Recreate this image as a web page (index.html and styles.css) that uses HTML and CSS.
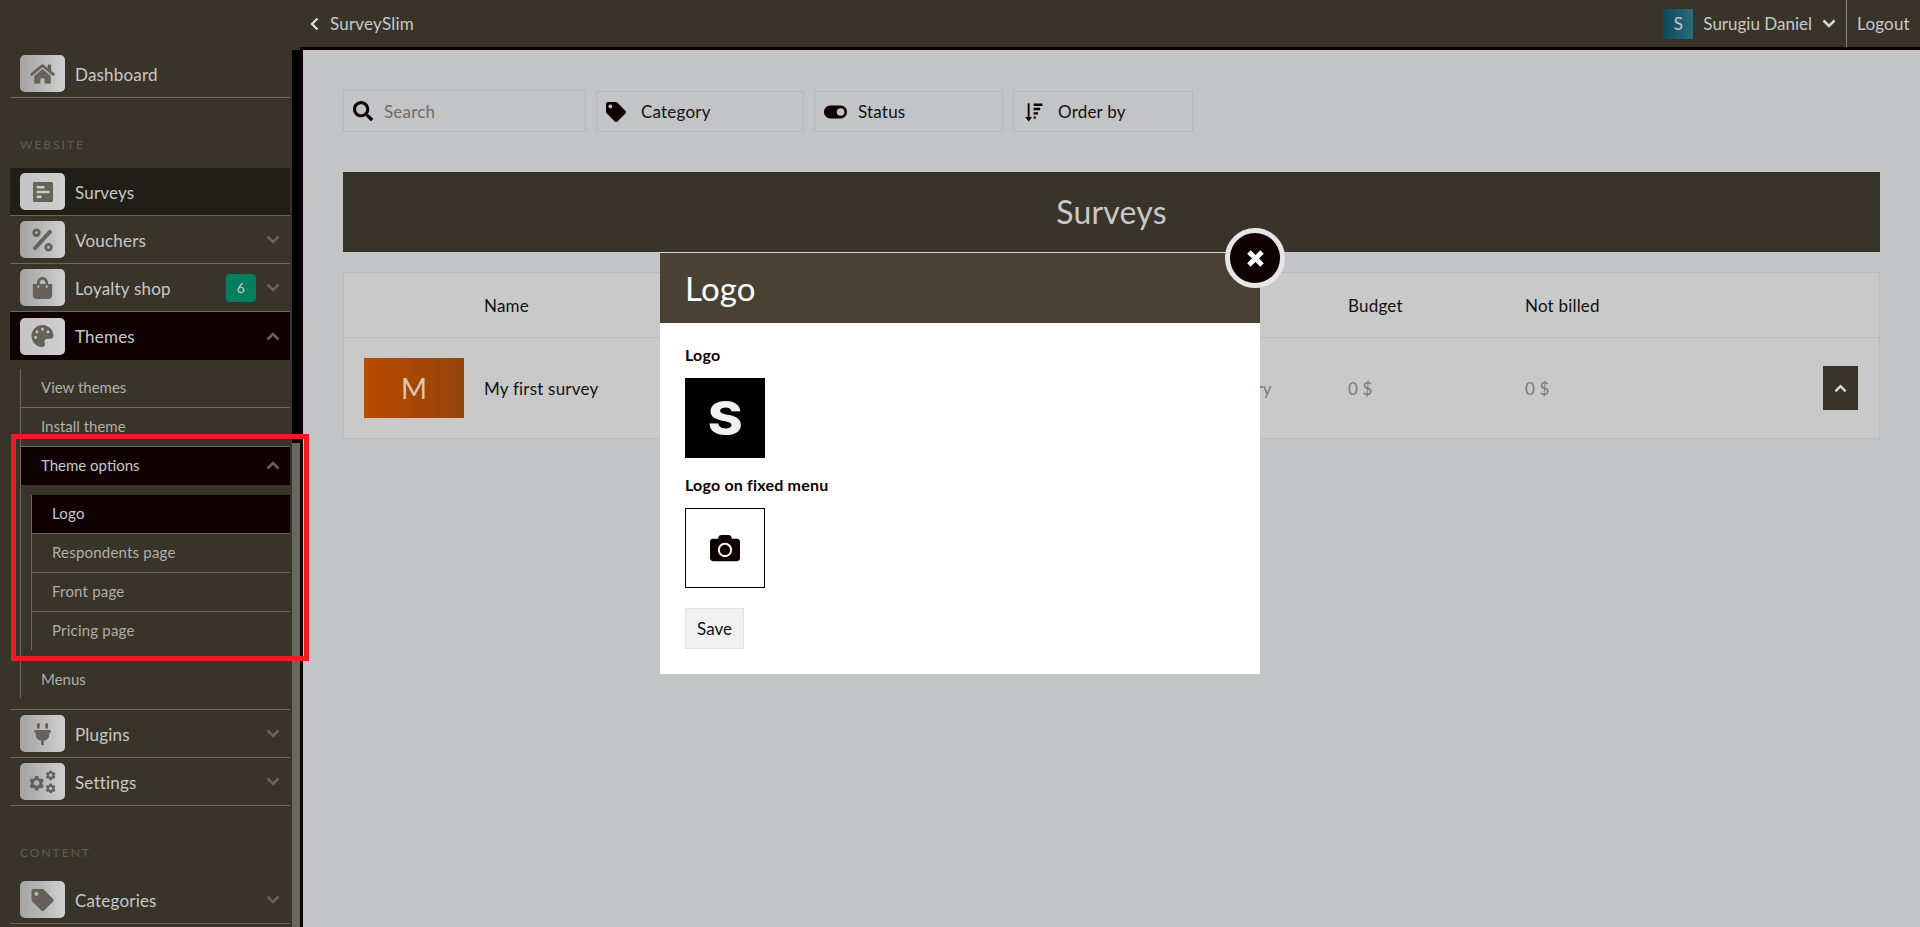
FILE: index.html
```html
<!DOCTYPE html>
<html lang="en">
<head>
    <meta charset="UTF-8">
    <meta name="viewport" content="width=device-width, initial-scale=1.0">
    <title>Surveys</title>
    <link rel="stylesheet" href="styles.css">
</head>
<body>
    <div class="left-col">
        <nav class="sidebar">
            <a class="nav-row">
                <span class="nav-icon"><svg viewBox="0 0 576 512"><path d="M280.37 148.26L96 300.11V464a16 16 0 0 0 16 16l112.06-.29a16 16 0 0 0 15.92-16V368a16 16 0 0 1 16-16h64a16 16 0 0 1 16 16v95.64a16 16 0 0 0 16 16.05L464 480a16 16 0 0 0 16-16V300L295.67 148.26a12.19 12.19 0 0 0-15.3 0zM571.6 251.47L488 182.56V44.05a12 12 0 0 0-12-12h-56a12 12 0 0 0-12 12v72.61L318.47 43a48 48 0 0 0-61 0L4.34 251.47a12 12 0 0 0-1.6 16.9l25.5 31A12 12 0 0 0 45.15 301l235.22-193.74a12.19 12.19 0 0 1 15.3 0L530.9 301a12 12 0 0 0 16.9-1.6l25.5-31a12 12 0 0 0-1.7-16.93z"/></svg></span>
                <span class="nav-text">Dashboard</span>
            </a>
            <div class="nav-label">WEBSITE</div>
            <a class="nav-row current">
                <span class="nav-icon light"><svg class="ico-poll" viewBox="0 0 448 448"><path fill-rule="evenodd" d="M40 0h368c22 0 40 18 40 40v368c0 22-18 40-40 40H40c-22 0-40-18-40-40V40C0 18 18 0 40 0zM80 88v56h176V88zM80 196v56h288v-56zM80 304v56h112v-56z"/></svg></span>
                <span class="nav-text">Surveys</span>
            </a>
            <a class="nav-row">
                <span class="nav-icon"><svg class="ico-percent" viewBox="0 0 448 512"><path d="M370 30l68 50L78 482l-68-50z"/><path fill-rule="evenodd" d="M95 10a90 90 0 1 1 0 180 90 90 0 0 1 0-180zm0 60a30 30 0 1 0 0 60 30 30 0 0 0 0-60zM353 322a90 90 0 1 1 0 180 90 90 0 0 1 0-180zm0 60a30 30 0 1 0 0 60 30 30 0 0 0 0-60z"/></svg></span>
                <span class="nav-text">Vouchers</span>
                <svg class="chev" viewBox="0 0 14 9"><path d="M1.500 1.500L7 7l5.500-5.500"/></svg>
            </a>
            <a class="nav-row">
                <span class="nav-icon"><svg viewBox="0 0 448 512"><path d="M352 160v-32C352 57.420 294.579 0 224 0 153.420 0 96 57.420 96 128v32H0v272c0 44.183 35.817 80 80 80h288c44.183 0 80-35.817 80-80V160h-96zm-192-32c0-35.290 28.710-64 64-64s64 28.710 64 64v32H160v-32zm160 120c-13.255 0-24-10.745-24-24s10.745-24 24-24 24 10.745 24 24-10.745 24-24 24zm-192 0c-13.255 0-24-10.745-24-24s10.745-24 24-24 24 10.745 24 24-10.745 24-24 24z"/></svg></span>
                <span class="nav-text">Loyalty shop</span>
                <span class="badge">6</span>
                <svg class="chev" viewBox="0 0 14 9"><path d="M1.500 1.500L7 7l5.500-5.500"/></svg>
            </a>
            <a class="nav-row open">
                <span class="nav-icon light"><svg viewBox="0 0 512 512"><path d="M204.300 5C104.900 24.400 24.800 104.300 5.200 203.400c-37 187 131.700 326.400 258.800 306.700 41.200-6.400 61.400-54.600 42.500-91.700-23.100-45.400 9.900-98.400 60.900-98.400h79.700c35.800 0 64.800-29.600 64.900-65.300C511.500 97.100 368.100-26.900 204.300 5zM96 320c-17.700 0-32-14.300-32-32s14.300-32 32-32 32 14.300 32 32-14.300 32-32 32zm32-128c-17.700 0-32-14.300-32-32s14.300-32 32-32 32 14.300 32 32-14.300 32-32 32zm128-64c-17.700 0-32-14.300-32-32s14.300-32 32-32 32 14.300 32 32-14.300 32-32 32zm128 64c-17.700 0-32-14.300-32-32s14.300-32 32-32 32 14.300 32 32-14.300 32-32 32z"/></svg></span>
                <span class="nav-text">Themes</span>
                <svg class="chev" viewBox="0 0 14 9"><path d="M1.500 7.500L7 2l5.500 5.500"/></svg>
            </a>
            <div class="subnav">
                <a class="sub-row">View themes</a>
                <a class="sub-row">Install theme</a>
                <a class="sub-row open">Theme options<svg class="chev" viewBox="0 0 14 9"><path d="M1.500 7.500L7 2l5.500 5.500"/></svg></a>
                <div class="subsub">
                    <a class="subsub-row open">Logo</a>
                    <a class="subsub-row">Respondents page</a>
                    <a class="subsub-row">Front page</a>
                    <a class="subsub-row last">Pricing page</a>
                </div>
                <a class="sub-row last">Menus</a>
            </div>
            <a class="nav-row topline">
                <span class="nav-icon"><svg viewBox="0 0 384 512"><path d="M320 32a32 32 0 0 0-64 0v96h64zm48 128H16a16 16 0 0 0-16 16v32a16 16 0 0 0 16 16h16v32a160.070 160.070 0 0 0 128 156.800V512h64v-99.200A160.070 160.070 0 0 0 352 256v-32h16a16 16 0 0 0 16-16v-32a16 16 0 0 0-16-16zM128 32a32 32 0 0 0-64 0v96h64z"/></svg></span>
                <span class="nav-text">Plugins</span>
                <svg class="chev" viewBox="0 0 14 9"><path d="M1.500 1.500L7 7l5.500-5.500"/></svg>
            </a>
            <a class="nav-row">
                <span class="nav-icon"><svg class="ico-cogs" viewBox="20 10 620 490"><path fill-rule="evenodd" d="M170 140h70l10 42 32 18 40-14 36 60-32 30v36l32 30-36 60-40-14-32 18-10 42h-70l-10-42-32-18-40 14-36-60 32-30v-36l-32-30 36-60 40 14 32-18zM205 230a58 58 0 1 0 0 116 58 58 0 0 0 0-116zM480 20h48l6 28 22 12 26-10 24 42-20 20v24l20 20-24 42-26-10-22 12-6 28h-48l-6-28-22-12-26 10-24-42 20-20v-24l-20-20 24-42 26 10 22-12zM504 85a35 35 0 1 0 0 70 35 35 0 0 0 0-70zM480 300h48l6 28 22 12 26-10 24 42-20 20v24l20 20-24 42-26-10-22 12-6 28h-48l-6-28-22-12-26 10-24-42 20-20v-24l-20-20 24-42 26 10 22-12zM504 365a35 35 0 1 0 0 70 35 35 0 0 0 0-70z"/></svg></span>
                <span class="nav-text">Settings</span>
                <svg class="chev" viewBox="0 0 14 9"><path d="M1.500 1.500L7 7l5.500-5.500"/></svg>
            </a>
            <div class="nav-label">CONTENT</div>
            <a class="nav-row">
                <span class="nav-icon"><svg viewBox="0 0 512 512"><path d="M0 252.118V48C0 21.490 21.490 0 48 0h204.118a48 48 0 0 1 33.941 14.059l211.882 211.882c18.745 18.745 18.745 49.137 0 67.882L293.823 497.941c-18.745 18.745-49.137 18.745-67.882 0L14.059 286.059A48 48 0 0 1 0 252.118zM112 64c-26.510 0-48 21.490-48 48s21.490 48 48 48 48-21.490 48-48-21.490-48-48-48z"/></svg></span>
                <span class="nav-text">Categories</span>
                <svg class="chev" viewBox="0 0 14 9"><path d="M1.500 1.500L7 7l5.500-5.500"/></svg>
            </a>
        </nav>
        <div class="scrollbar"><div class="thumb"></div></div>
    </div>

    <div class="right-col">
        <header class="topbar">
            <a class="back"><svg viewBox="0 0 9 14"><path d="M7.500 1.500L2 7l5.500 5.500"/></svg>SurveySlim</a>
            <div class="user">
                <span class="avatar">S</span>
                <span>Surugiu Daniel</span>
                <svg class="user-chev" viewBox="0 0 14 9"><path d="M1.500 1.500L7 7l5.500-5.500"/></svg>
            </div>
            <a class="logout">Logout</a>
        </header>

        <main class="content">
            <div class="filters">
                <div class="filter search">
                    <svg viewBox="0 0 512 512"><path d="M505 442.700L405.300 343c-4.500-4.500-10.600-7-17-7H372c27.600-35.300 44-79.700 44-128C416 93.100 322.900 0 208 0S0 93.100 0 208s93.100 208 208 208c48.300 0 92.700-16.400 128-44v16.300c0 6.400 2.500 12.500 7 17l99.700 99.700c9.400 9.400 24.600 9.400 33.900 0l28.300-28.300c9.400-9.400 9.400-24.600.1-34zM208 336c-70.700 0-128-57.200-128-128 0-70.700 57.200-128 128-128 70.700 0 128 57.200 128 128 0 70.700-57.200 128-128 128z"/></svg>
                    <span class="placeholder">Search</span>
                </div>
                <div class="filter category">
                    <svg viewBox="0 0 512 512"><path d="M0 252.118V48C0 21.490 21.490 0 48 0h204.118a48 48 0 0 1 33.941 14.059l211.882 211.882c18.745 18.745 18.745 49.137 0 67.882L293.823 497.941c-18.745 18.745-49.137 18.745-67.882 0L14.059 286.059A48 48 0 0 1 0 252.118zM112 64c-26.510 0-48 21.490-48 48s21.490 48 48 48 48-21.490 48-48-21.490-48-48-48z"/></svg>
                    <span>Category</span>
                </div>
                <div class="filter status">
                    <svg class="ico-toggle" viewBox="0 96 576 320"><path fill-rule="evenodd" d="M160 96h256c88 0 160 72 160 160s-72 160-160 160H160C72 416 0 344 0 256S72 96 160 96zm256 64a96 96 0 1 0 0 192 96 96 0 0 0 0-192z"/></svg>
                    <span>Status</span>
                </div>
                <div class="filter order">
                    <svg viewBox="0 0 512 512"><path d="M120 32h48v352h64l-88 112-88-112h64zM272 40h224v60H272zM272 150h168v60H272zM272 260h112v60H272zM272 370h56v60h-56z"/></svg>
                    <span>Order by</span>
                </div>
            </div>

            <div class="page-title">Surveys</div>

            <div class="table">
                <div class="table-row head">
                    <div></div>
                    <div>Name</div>
                    <div></div>
                    <div>Budget</div>
                    <div>Not billed</div>
                    <div></div>
                </div>
                <div class="table-row body-row">
                    <div><span class="thumb-m">M</span></div>
                    <div class="name">My first survey</div>
                    <div>Category</div>
                    <div>0 $</div>
                    <div>0 $</div>
                    <div class="toggle-cell"><button class="toggle" type="button"><svg viewBox="0 0 14 9"><path d="M1.500 7.500L7 2l5.500 5.500"/></svg></button></div>
                </div>
            </div>
        </main>
    </div>

    <div class="modal">
        <div class="modal-head">Logo</div>
        <div class="modal-body">
            <div class="field-label">Logo</div>
            <div class="logo-box"><span class="logo-s">S</span></div>
            <div class="field-label">Logo on fixed menu</div>
            <div class="upload-box">
                <svg viewBox="0 0 512 512"><path d="M512 144v288c0 26.500-21.500 48-48 48H48c-26.500 0-48-21.500-48-48V144c0-26.500 21.500-48 48-48h88l12.300-32.900c7-18.700 24.900-31.100 44.900-31.100h125.500c20 0 37.900 12.400 44.900 31.100L376 96h88c26.500 0 48 21.500 48 48zM376 288c0-66.200-53.800-120-120-120s-120 53.800-120 120 53.800 120 120 120 120-53.800 120-120zm-32 0c0 48.500-39.500 88-88 88s-88-39.500-88-88 39.500-88 88-88 88 39.500 88 88z"/></svg>
            </div>
            <button class="save" type="button">Save</button>
        </div>
        <button class="close" type="button"><svg viewBox="0 0 14 14"><path d="M3 3l8 8M11 3l-8 8"/></svg></button>
    </div>

    <div class="highlight"></div>
</body>
</html>
```

FILE: styles.css
```css
* {
    box-sizing: border-box;
}
html, body {
    height: 100%;
}
body {
    position: relative;
    display: flex;
    margin: 0;
    height: 927px;
    overflow: hidden;
    font-family: "Lato", "Noto Sans", sans-serif;
    font-size: 17px;
    letter-spacing: 0.2px;
    color: #111;
    background: #38342a;
}
svg {
    display: block;
}

/* sidebar */
.left-col {
    display: flex;
    flex: none;
    width: 300px;
}
.sidebar {
    flex: none;
    width: 292px;
    height: 927px;
    padding: 50px 2px 0 10px;
    overflow: hidden;
}
.scrollbar {
    width: 8px;
    margin-top: 50px;
    padding-top: 393px;
    background: #000;
}
.thumb {
    height: 100%;
    background: #6b675d;
}
.nav-row {
    display: flex;
    align-items: center;
    height: 48px;
    padding: 5px 10px 5px 10px;
    border-bottom: 1px solid #6b675d;
    color: #c8c8c8;
}
.nav-row.current {
    background: #1f1e19;
}
.nav-row.open {
    background: #0f0003;
    border-bottom: 0;
}
.nav-row.topline {
    margin-top: 11px;
    border-top: 1px solid #6b675d;
    height: 49px;
}
.nav-icon {
    display: flex;
    flex: none;
    align-items: center;
    justify-content: center;
    width: 45px;
    height: 37px;
    border-radius: 5px;
    background: linear-gradient(to right, #a3a3a3, #cfcfcf);
}
.nav-icon.light {
    background: linear-gradient(to right, #c4c4c4, #cfcfcf);
}
.nav-icon svg {
    width: 25px;
    height: 22px;
    fill: #66625a;
}
.nav-icon .ico-poll {
    width: 20px;
    height: 20px;
}
.nav-icon .ico-percent {
    width: 21px;
    height: 24px;
}
.nav-icon .ico-cogs {
    width: 29px;
    height: 23px;
}
.nav-text {
    flex: 1;
    margin-left: 10px;
    padding-top: 1px;
}
.chev {
    flex: none;
    width: 14px;
    height: 9px;
    fill: none;
    stroke: #66625a;
    stroke-width: 2.6;
}
.badge {
    width: 30px;
    height: 28px;
    margin-right: 10px;
    border-radius: 4px;
    background: #007f5f;
    font-size: 14px;
    line-height: 28px;
    text-align: center;
}
.nav-label {
    height: 70px;
    padding: 39px 0 0 10px;
    font-size: 12px;
    line-height: 16px;
    letter-spacing: 2px;
    color: #5f5b53;
}
.subnav {
    margin: 9px 0 0 10px;
    border-left: 1px solid #6b675d;
    font-size: 15px;
    color: #b0aea8;
}
.sub-row {
    display: flex;
    align-items: center;
    justify-content: space-between;
    height: 39px;
    padding: 0 10px 2px 20px;
    border-bottom: 1px solid #6b675d;
    letter-spacing: 0;
}
.sub-row.open {
    height: 38px;
    background: #0f0003;
    border-bottom: 0;
    color: #c8c8c8;
}
.sub-row.last {
    height: 37px;
    border-bottom: 0;
}
.subsub {
    margin: 10px 0 11px 10px;
    border-left: 1px solid #6b675d;
}
.subsub-row {
    display: flex;
    align-items: center;
    height: 39px;
    padding: 0 0 2px 20px;
    border-bottom: 1px solid #6b675d;
}
.subsub-row.open {
    background: #0f0003;
    color: #c8c8c8;
}
.subsub-row.last {
    height: 38px;
    border-bottom: 0;
}

/* top bar */
.right-col {
    display: flex;
    flex: 1;
    flex-direction: column;
    min-width: 0;
}
.topbar {
    display: flex;
    flex: none;
    align-items: center;
    height: 50px;
    border-bottom: 3px solid #0f0003;
    color: #c8c8c8;
}
.back {
    display: flex;
    align-items: center;
    margin-left: 10px;
    flex: 1;
}
.back svg {
    width: 9px;
    height: 14px;
    margin-right: 11px;
    fill: none;
    stroke: #d8d8d8;
    stroke-width: 2.4;
}
.user {
    display: flex;
    align-items: center;
    height: 47px;
    padding-right: 10px;
    border-right: 1px solid #8a8880;
    letter-spacing: 0;
}
.avatar {
    width: 30px;
    height: 30px;
    margin-right: 10px;
    background: linear-gradient(to right, #0d4a5c, #2a6a7a);
    line-height: 30px;
    text-align: center;
}
.user-chev {
    width: 14px;
    height: 9px;
    margin-left: 10px;
    fill: none;
    stroke: #d8d8d8;
    stroke-width: 2.6;
}
.logout {
    width: 73px;
    text-align: center;
}

/* page content */
.content {
    flex: 1;
    padding: 40px 40px 0;
    background: #c3c4c6;
    border-left: 3px solid #0f0003;
}
.filters {
    display: flex;
    align-items: flex-end;
    gap: 10px;
}
.filter {
    display: flex;
    align-items: center;
    height: 41px;
    padding-left: 9px;
    border: 1px solid #b6b7b9;
}
.filter svg {
    flex: none;
    width: 20px;
    height: 20px;
    margin-right: 15px;
    fill: #0f0003;
}
.filter.search {
    width: 243px;
    height: 42px;
}
.filter.search svg {
    margin-right: 11px;
}
.filter.category {
    width: 208px;
}
.filter.status {
    width: 189px;
}
.filter.order {
    width: 180px;
}
.filter .ico-toggle {
    width: 23px;
    height: 14px;
    margin-right: 11px;
}
.placeholder {
    color: #6e6c6a;
}
.page-title {
    height: 80px;
    margin-top: 40px;
    background: #38342a;
    color: #c8c8c8;
    font-size: 32px;
    line-height: 80px;
    text-align: center;
}
.table {
    margin-top: 20px;
    background: #c9c9c9;
    border: 1px solid #bcbcbc;
}
.table-row {
    display: grid;
    grid-template-columns: 140px 718px 146px 177px 298px 55px;
    align-items: center;
}
.table-row.head {
    height: 65px;
    border-bottom: 1px solid #bcbcbc;
}
.table-row.body-row {
    height: 100px;
    color: #7a7a7a;
}
.name {
    color: #111;
}
.thumb-m {
    display: block;
    width: 100px;
    height: 60px;
    margin-left: 20px;
    background: linear-gradient(to right, #b94a00, #94430a);
    color: #d8c8b8;
    font-size: 28px;
    line-height: 60px;
    text-align: center;
}
.toggle {
    display: flex;
    align-items: center;
    justify-content: center;
    width: 35px;
    height: 44px;
    padding: 0;
    background: #38342a;
    border: 0;
}
.toggle svg {
    width: 13px;
    height: 9px;
    fill: none;
    stroke: #d8d8d8;
    stroke-width: 2.6;
}

/* modal */
.modal {
    position: absolute;
    left: 660px;
    top: 252px;
    width: 600px;
    background: #fff;
    border-top: 1px solid #d8d8d8;
}
.modal-head {
    height: 70px;
    padding-left: 25px;
    background: #484134;
    color: #fff;
    font-size: 33px;
    line-height: 70px;
}
.modal-body {
    padding: 22px 25px 25px;
}
.field-label {
    margin-bottom: 13px;
    font-size: 16px;
    font-weight: 700;
    line-height: 20px;
    color: #0f0003;
}
.logo-box, .upload-box {
    display: flex;
    align-items: center;
    justify-content: center;
    width: 80px;
    height: 80px;
    margin-bottom: 17px;
}
.logo-box {
    background: #000;
}
.logo-s {
    font-family: "Inter", sans-serif;
    font-size: 46px;
    font-weight: 800;
    line-height: 1;
    color: #f0f0f0;
    transform: scale(1.15, 1);
}
.upload-box {
    margin-bottom: 20px;
    border: 1px solid #000;
}
.upload-box svg {
    width: 30px;
    height: 30px;
    fill: #0f0003;
}
.save {
    display: block;
    width: 59px;
    height: 41px;
    padding: 0;
    background: #f0f0f0;
    border: 1px solid #e2e2e2;
    font: inherit;
    color: #111;
}
.close {
    position: absolute;
    top: -25px;
    right: -25px;
    display: flex;
    align-items: center;
    justify-content: center;
    width: 60px;
    height: 60px;
    padding: 0;
    background: #0f0003;
    border: 5px solid #e6e6e6;
    border-radius: 50%;
}
.close svg {
    width: 23px;
    height: 23px;
    fill: none;
    stroke: #fff;
    stroke-width: 3;
}

/* red annotation box */
.highlight {
    position: absolute;
    left: 11px;
    top: 434px;
    width: 298px;
    height: 227px;
    border: 5px solid #ed1c24;
}
```
